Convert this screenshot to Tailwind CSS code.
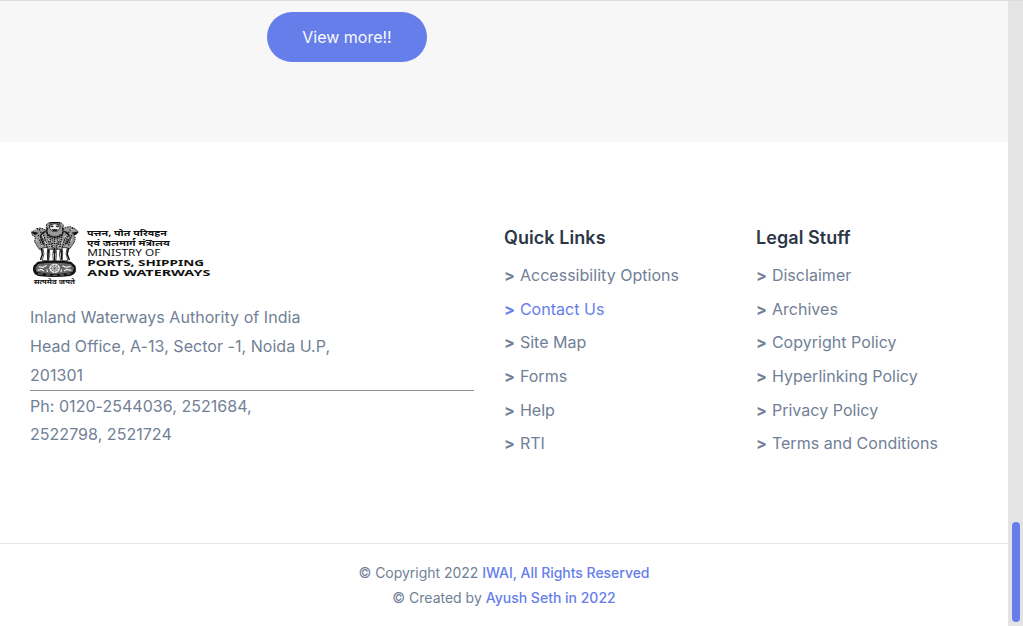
<!DOCTYPE html>
<html lang="en">
<head>
<meta charset="utf-8">
<title>IWAI</title>
<script src="https://cdn.jsdelivr.net/npm/@tailwindcss/browser@4"></script>
</head>
<body class="flex h-[626px] overflow-hidden bg-white font-['Inter',sans-serif] text-[16px] text-[#718096]">
<div class="flex w-[1008px] flex-col">
  <section class="h-[142px] border-t border-[#dcdcdc] bg-[#f7f7f7] pt-[11px] pl-[267px]">
    <a class="flex h-[50px] w-[160px] items-center justify-center rounded-full bg-[#667eea] text-[#f7fafc]">View more!!</a>
  </section>
  <footer class="flex flex-1 flex-col">
    <div class="flex h-[402px] border-b border-[#e2e8f0] pt-20 pl-[30px]">
      <div class="w-[474px] leading-[28.8px] tracking-[0.04px]">
        <svg class="block h-[63px] w-[181px] tracking-normal" viewBox="30 21 543 189" fill="#111">
          <!-- lions and legs -->
          <g transform="translate(-5 0) scale(1.11 1)" stroke="#111" stroke-width="2.5" stroke-linejoin="round">
            <path fill="#999" stroke-dasharray="5 2" d="M76 29l8-7 14-2 16 2 8 8-2 12 7-5 13-2 11 5 9 8-2 9-8 3 4 9-3 13-6 10-6 9-8 6-9 3-20 3-22-3-16-3-9-6-6-11-5-10 2-14-8-5-2-9 9-7 13-6 11 3 6 5z"/>
            <path fill="#eee" d="M84 30q14-8 29 0l-1 11-7 7H92l-7-7z"/>
            <path fill="none" stroke-width="3.5" d="M84 25q14-6 29 0M79 38q-5 13 2 23 18 12 36 0 7-10 2-23M74 49q-13 5-14 18l8 22M124 49q13 5 14 18l-8 22"/>
            <path d="M87 33h7l-2 3zM103 33h7l-5 3zM92 44h13l-3 3h-7zM36 51l16 3-7 5zM162 51l-16 3 7 5z"/>
            <path fill="none" stroke-width="3.5" stroke-dasharray="4 3" d="M77 51l8 45M84 58l7 42M91 62l3 39M98 63v39M106 62l-3 39M113 58l-7 42M120 51l-8 45M67 53l11 44M130 53l-11 44M54 60l9 34M144 60l-9 34M60 50l11 42M137 50l-11 42M49 40l12 7M148 40l-12 7"/>
            <path fill="#fff" stroke-width="2" d="M66 98h14l-2 18 2 21H65l4-21zM84 103h11l-2 18 2 18H81l4-19zM102 103h11l-2 17 4 19h-14l2-18zM118 98h14l-3 18 5 21h-16l2-23z"/>
            <path fill="none" stroke-width="4" d="M62 99l3 19-5 17M81 103l-1 31M98 102v35M116 103l1 31M136 99l-4 19 6 17"/>
          </g>
          <!-- base with wheel -->
          <g transform="translate(3 2)">
            <path d="M50 138q50-7 100 0l13 12q6 16-5 26l-10 5q-48 6-96 0l-10-5q-10-12-4-26z"/>
            <path d="M51 145q49-7 98 0l10 12-4 12q-54 12-108 0l-4-12z" fill="#666"/>
            <ellipse cx="101" cy="158" rx="16" ry="14" fill="#eee"/>
            <g fill="none" stroke="#444" stroke-width="1.5">
              <ellipse cx="101" cy="158" rx="10" ry="8.5"/>
              <path d="M101 146v25M87 158h28M91 149l20 18M111 149l-20 18"/>
            </g>
            <path fill="none" stroke="#eee" stroke-width="3.5" d="M53 153l13 2 11-6M50 164l11-3 8 6M124 150l11 5 14-3M129 166l8-5 14 3M77 161l3 8M122 161l-2 8"/>
            <path fill="none" stroke="#bbb" stroke-width="2" d="M51 175h15M75 178h13M95 179h13M116 178h13M137 175h12"/>
          </g>
          <g fill="none" stroke="#eee" stroke-width="2.5">
            <path d="M66 60l5 9M138 60l-5 9M84 71l4 6M119 71l-4 6M95 76l2 7M109 76l-1 7M75 79l4 8M128 79l-4 8M56 65l4 7M148 65l-4 7M43 45l8-2M160 45l-8-2M48 72l4 7M156 72l-4 7M62 88l4 6M141 88l-4 6M89 90l2 7M115 90l-2 7M102 88v8"/>
          </g>
          <g font-family="Noto Sans, Noto Sans Devanagari, sans-serif" font-weight="700">
            <text x="41" y="206" font-size="19" textLength="124" lengthAdjust="spacingAndGlyphs">सत्यमेव जयते</text>
            <text x="201" y="64" font-size="25" textLength="240" lengthAdjust="spacingAndGlyphs">पत्तन, पोत परिवहन</text>
            <text x="201" y="94" font-size="25" textLength="248" lengthAdjust="spacingAndGlyphs">एवं जलमार्ग मंत्रालय</text>
            <text x="202" y="123" font-size="26" font-weight="400" textLength="219" lengthAdjust="spacingAndGlyphs">MINISTRY OF</text>
            <text x="202" y="154" font-size="28" textLength="350" lengthAdjust="spacingAndGlyphs">PORTS, SHIPPING</text>
            <text x="202" y="182.500" font-size="28" textLength="369" lengthAdjust="spacingAndGlyphs">AND WATERWAYS</text>
          </g>
        </svg>
        <p class="mt-[18.2px]">Inland Waterways Authority of India<br>Head Office, A-13, Sector -1, Noida U.P,<br>201301</p>
        <hr class="h-[2px] w-[444px] border-t border-[#8f9494]">
        <p>Ph: 0120-2544036, 2521684,<br>2522798, 2521724</p>
      </div>
      <div class="w-[252px] tracking-[0.03px]">
        <h3 class="text-[18px] leading-8 font-semibold tracking-[0.06px] text-[#2d3748]">Quick Links</h3>
        <ul class="mt-[5.2px] leading-[33.6px]">
          <li><b class="mr-[5px] font-bold">&gt;</b>Accessibility Options</li>
          <li class="text-[#667eea]"><b class="mr-[5px] font-bold">&gt;</b>Contact Us</li>
          <li><b class="mr-[5px] font-bold">&gt;</b>Site Map</li>
          <li><b class="mr-[5px] font-bold">&gt;</b>Forms</li>
          <li><b class="mr-[5px] font-bold">&gt;</b>Help</li>
          <li><b class="mr-[5px] font-bold">&gt;</b>RTI</li>
        </ul>
      </div>
      <div class="tracking-[0.03px]">
        <h3 class="text-[18px] leading-8 font-semibold tracking-[0.06px] text-[#2d3748]">Legal Stuff</h3>
        <ul class="mt-[5.2px] leading-[33.6px]">
          <li><b class="mr-[5px] font-bold">&gt;</b>Disclaimer</li>
          <li><b class="mr-[5px] font-bold">&gt;</b>Archives</li>
          <li><b class="mr-[5px] font-bold">&gt;</b>Copyright Policy</li>
          <li><b class="mr-[5px] font-bold">&gt;</b>Hyperlinking Policy</li>
          <li><b class="mr-[5px] font-bold">&gt;</b>Privacy Policy</li>
          <li><b class="mr-[5px] font-bold">&gt;</b>Terms and Conditions</li>
        </ul>
      </div>
    </div>
    <div class="pt-4 text-center text-[14px] leading-[25.2px]">
      <p class="tracking-[-0.03px]">© Copyright 2022 <a class="font-medium text-[#667eea]">IWAI, All Rights Reserved</a></p>
      <p>© Created by <a class="font-medium text-[#667eea]">Ayush Seth in 2022</a></p>
    </div>
  </footer>
</div>
<div class="flex w-[15px] flex-col border-t border-[#dcdcdc] bg-[#e4e4e4] pt-[521px] pl-1">
  <div class="h-[100px] w-2 rounded-full bg-[#667eea]"></div>
</div>
</body>
</html>
